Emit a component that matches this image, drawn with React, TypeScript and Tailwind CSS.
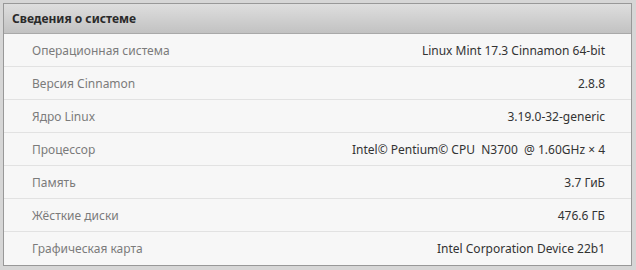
const rows: [string, string][] = [
  ['Операционная система', 'Linux Mint 17.3 Cinnamon 64-bit'],
  ['Версия Cinnamon', '2.8.8'],
  ['Ядро Linux', '3.19.0-32-generic'],
  ['Процессор', 'Intel© Pentium© CPU  N3700  @ 1.60GHz × 4'],
  ['Память', '3.7 ГиБ'],
  ['Жёсткие диски', '476.6 ГБ'],
  ['Графическая карта', 'Intel Corporation Device 22b1'],
];

export default function App() {
  return (
    <div
      className="w-[636px] h-[270px] bg-[#d6d6d6] pt-[3px] pl-[3px]"
      style={{ fontFamily: '"Noto Sans", "Open Sans", sans-serif' }}
    >
      <div className="w-[629px] border border-[#989898] bg-[#f7f7f7]">
        <div className="h-[30px] flex items-center px-[8px] bg-gradient-to-b from-[#dedede] to-[#c2c2c2] border-b border-[#a9a9a9]">
          <span className="text-[12px] font-bold text-[#2a2a2a]">Сведения о системе</span>
        </div>
        {rows.map(([label, value], i) => (
          <div
            key={label}
            className={`h-[33px] flex items-center justify-between pl-[28px] pr-[26px] pt-px text-[12px] ${
              i < rows.length - 1 ? 'border-b border-[#e2e2e2]' : 'h-[32px]'
            }`}
          >
            <span className="text-[#7b7b7b]">{label}</span>
            <span className="text-[#333333] whitespace-pre">{value}</span>
          </div>
        ))}
      </div>
    </div>
  );
}
